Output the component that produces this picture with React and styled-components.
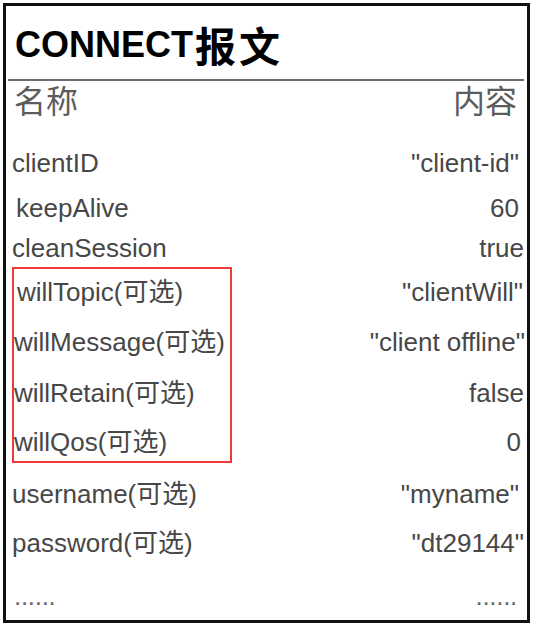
import React from 'react'
import styled, { createGlobalStyle } from 'styled-components'

const GlobalStyle = createGlobalStyle`
body {
  margin: 0;
  background: #ffffff;
  font-family: "Liberation Sans", Arial, "Noto Sans CJK SC", sans-serif;
}
`

const Card = styled.div`
width: 521px;
height: 614px;
margin: 3px 0 0 3px;
border: 3px solid #111111;
background: #ffffff;
display: flex;
flex-direction: column;
`

const Title = styled.h1`
margin: 19px 0 0 0;
padding-left: 9px;
height: 40px;
line-height: 40px;
font-size: 36px;
font-weight: bold;
color: #000000;
white-space: nowrap;
`

const TitleCjk = styled.span`
font-family: "Noto Sans CJK SC", sans-serif;
font-size: 41px;
letter-spacing: 3px;
margin-left: 2px;
line-height: 0;
vertical-align: -5px;
`

const Divider = styled.div`
height: 2px;
margin: 14px 3px 0 2px;
background: #6e6e6e;
`

const Header = styled.div`
display: flex;
justify-content: space-between;
margin-top: 4px;
padding: 0 10px 0 8px;
height: 34px;
line-height: 34px;
font-size: 32px;
color: #5c5c5c;
`

const Row = styled.div`
display: flex;
justify-content: space-between;
margin-top: ${p => p.$gap}px;
padding: 0 ${p => p.$right}px 0 ${p => 6 + p.$indent}px;
height: 40px;
line-height: 40px;
font-size: 26px;
color: #474747;
white-space: nowrap;
`

const Optional = styled.div`
position: relative;
margin-top: 4px;

&::before {
  content: '';
  position: absolute;
  left: 6px;
  top: -5px;
  bottom: -1px;
  width: 220px;
  border: 2px solid #f03a3a;
  box-sizing: border-box;
  pointer-events: none;
}
`

const Dots = styled.span`
color: #6a6a6a;
letter-spacing: -0.3px;
`

const topRows = [
  { name: 'clientID', value: '"client-id"', gap: 24, indent: 0, right: 8 },
  { name: 'keepAlive', value: '60', gap: 5, indent: 4, right: 8 },
  { name: 'cleanSession', value: 'true', gap: 0, indent: 0, right: 3 },
]

const willRows = [
  { name: 'willTopic(可选)', value: '"clientWill"', gap: 0, indent: 5, right: 4 },
  { name: 'willMessage(可选)', value: '"client offline"', gap: 10, indent: 2, right: 2 },
  { name: 'willRetain(可选)', value: 'false', gap: 11, indent: 2, right: 3 },
  { name: 'willQos(可选)', value: '0', gap: 9, indent: 2, right: 6 },
]

const authRows = [
  { name: 'username(可选)', value: '"myname"', gap: 12, indent: 0, right: 8 },
  { name: 'password(可选)', value: '"dt29144"', gap: 9, indent: 0, right: 3 },
]

const Field = ({ row }) => (
  <Row $gap={row.gap} $indent={row.indent} $right={row.right}>
    <span>{row.name}</span>
    <span>{row.value}</span>
  </Row>
)

const App = () => {
  return (
    <>
      <GlobalStyle />
      <Card>
        <Title>
          CONNECT<TitleCjk>报文</TitleCjk>
        </Title>
        <Divider />
        <Header>
          <span>名称</span>
          <span>内容</span>
        </Header>
        {topRows.map(r => <Field key={r.name} row={r} />)}
        <Optional>
          {willRows.map(r => <Field key={r.name} row={r} />)}
        </Optional>
        {authRows.map(r => <Field key={r.name} row={r} />)}
        <Row $gap={13} $indent={2} $right={10}>
          <Dots>......</Dots>
          <Dots>......</Dots>
        </Row>
      </Card>
    </>
  )
}

export default App
